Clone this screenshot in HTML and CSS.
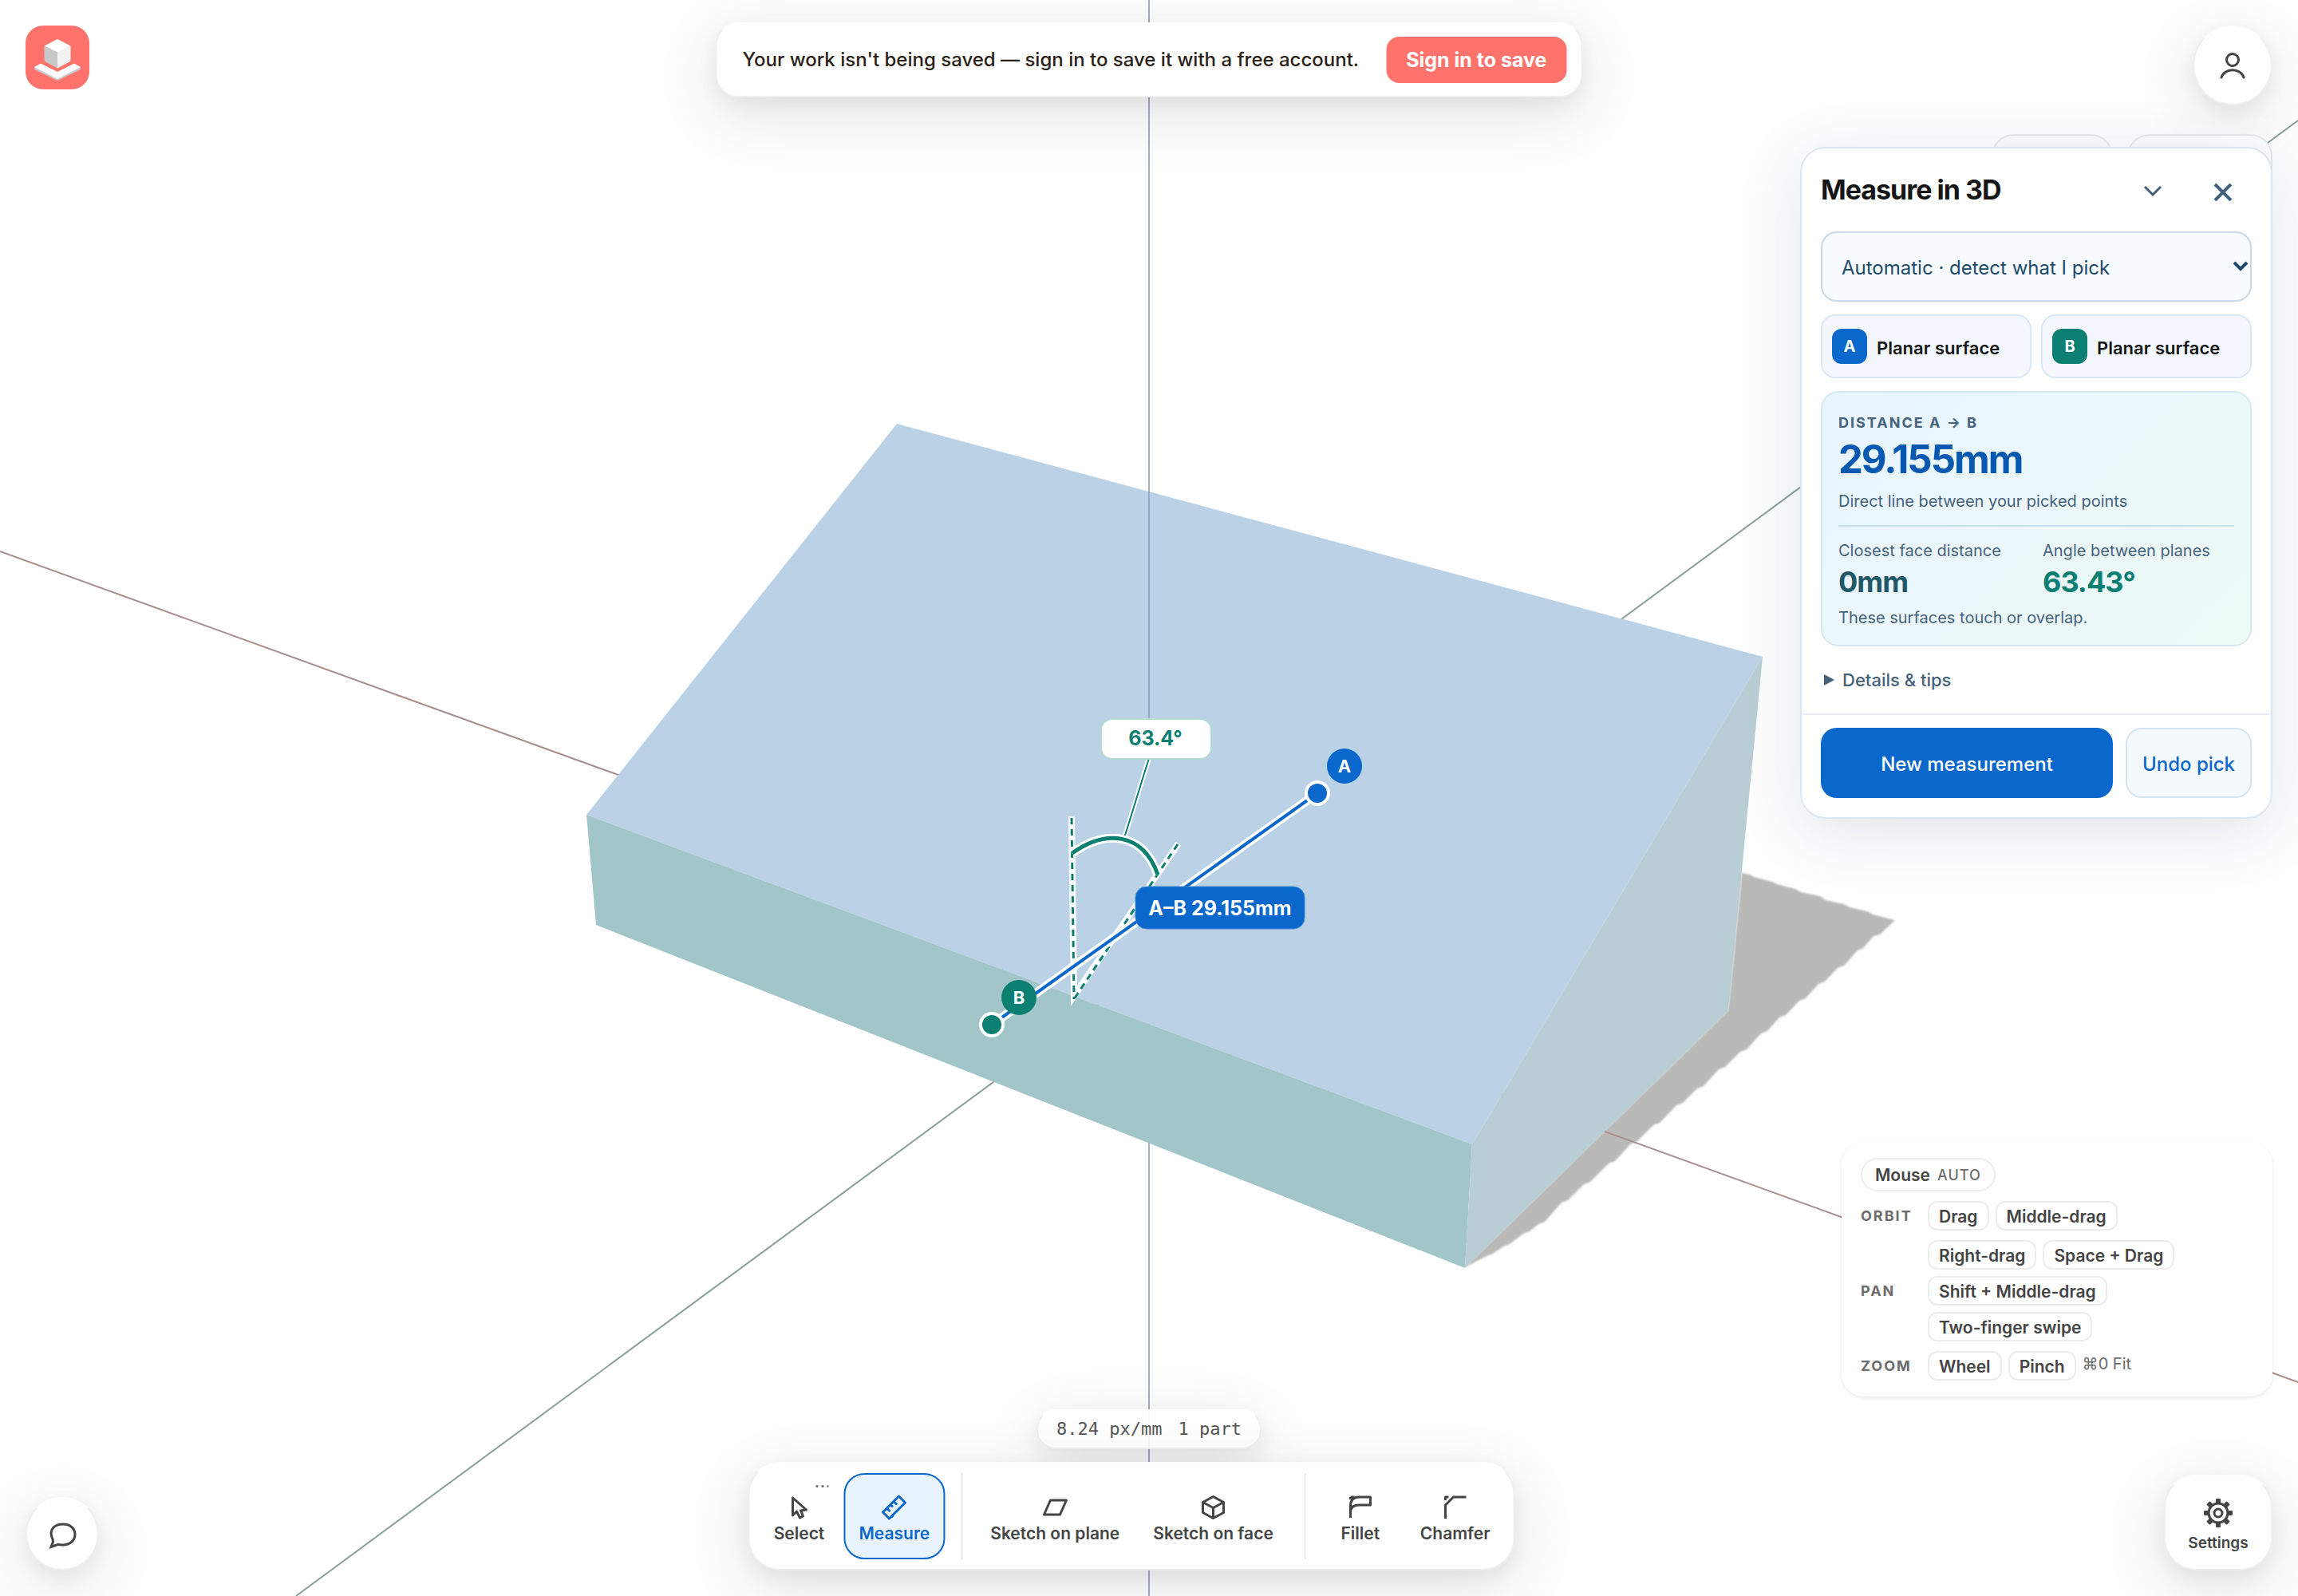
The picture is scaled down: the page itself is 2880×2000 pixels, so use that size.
FILE: index.html
```html
<!DOCTYPE html>
<html lang="en">
<head>
<meta charset="utf-8">
<meta name="viewport" content="width=device-width, initial-scale=1">
<title>Measure in 3D</title>
<link rel="stylesheet" href="styles.css">
</head>
<body>
<main class="workspace">
  <svg class="scene" viewBox="0 0 2880 2000" preserveAspectRatio="xMidYMid slice" role="img" aria-label="Wedge model with a measurement between two faces">
    <polygon class="cast-shadow" points="1836,1588 2166,1266 2183,1094 2193,1096 2198,1099 2221,1105 2227,1108 2250,1114 2257,1118 2281,1123 2288,1128 2311,1133 2318,1137 2340,1142 2347,1146 2375,1153 2356,1171 2348,1173 2335,1188 2328,1191 2311,1210 2303,1213 2287,1230 2279,1233 2263,1251 2255,1254 2238,1272 2230,1275 2215,1292 2207,1295 2189,1315 2181,1318 2162,1337 2154,1340 2135,1361 2127,1364 2109,1382 2101,1385 2080,1407 2072,1410 2051,1431 2043,1434 2024,1455 2016,1458 1993,1481 1985,1484 1965,1504 1957,1507 1936,1531 1928,1534 1917,1543 1909,1546 1892,1559 1884,1562 1871,1571 1863,1574 1842,1585"/>
    <line class="axis axis-x" x1="0" y1="691" x2="2880" y2="1732"/>
    <line class="axis axis-y" x1="371" y1="2000" x2="2880" y2="151"/>
    <line class="axis axis-z" x1="1440" y1="0" x2="1440" y2="2000"/>
    <polygon class="face-top" points="1124,531 2209,823 1845,1434 735,1021"/>
    <polygon class="face-front" points="735,1021 1845,1434 1836,1589 747,1159"/>
    <polygon class="face-side" points="2209,823 2166,1266 1836,1589 1845,1434"/>
    <line class="axis axis-z-over" x1="1440" y1="616" x2="1440" y2="900"/>

    <path class="halo" d="M1343 1023 L1346 1248 L1477 1057"/>
    <path class="ray" d="M1343 1025 L1346 1252"/>
    <path class="ray" d="M1476 1058 L1346 1252"/>
    <path class="halo halo-thin" d="M1440 950 L1409 1050"/>
    <path class="leader" d="M1440 950 L1409 1050"/>
    <path class="halo halo-arc" d="M1344 1069 C1385 1040 1432 1042 1451 1096"/>
    <path class="arc" d="M1344 1069 C1385 1040 1432 1042 1451 1096"/>
    <path class="halo halo-span" d="M1243 1284 L1651 994"/>
    <path class="span" d="M1243 1284 L1651 994"/>
    <circle class="point point-a" cx="1651" cy="994" r="14"/>
    <circle class="point point-b" cx="1243" cy="1284" r="14"/>
    <circle class="tag-a" cx="1685" cy="960" r="22"/>
    <text class="tag-text" x="1685" y="968">A</text>
    <circle class="tag-b" cx="1277" cy="1250" r="22"/>
    <text class="tag-text" x="1277" y="1258">B</text>
    <rect class="angle-box" x="1380" y="901" width="138" height="50" rx="14"/>
    <text class="angle-text" x="1448" y="934">63.4°</text>
    <rect class="span-box" x="1423" y="1111" width="212" height="53" rx="14"/>
    <text class="span-text" x="1529" y="1147">A–B 29.155mm</text>
  </svg>

  <a class="logo" href="#" aria-label="Home">
    <svg viewBox="0 0 80 80" aria-hidden="true">
      <path fill="#c9c9c8" d="M11 52v3l29 14 29-14v-3L40 60z"/>
      <path fill="#fff" d="M11 52l8-4.500 21 10.500 21-10.500 8 4.500-29 15z"/>
      <path fill="#fff" d="M40 17l16.500 8.500L40 34l-16.500-8.500z"/>
      <path fill="#c8c8c8" d="M23.500 25.500L40 33.500v20l-15-8q-1.500-1-1.500-3z"/>
      <path fill="#f2f2f1" d="M56.500 25.500L40 33.500v20l15-8q1.500-1 1.500-3z"/>
    </svg>
  </a>

  <aside class="toast raised" role="status">
    <span>Your work isn't being saved — sign in to save it with a free account.</span>
    <button class="toast-action" type="button">Sign in to save</button>
  </aside>

  <button class="account raised" type="button" aria-label="Account">
    <svg viewBox="0 0 36 36" aria-hidden="true"><circle cx="18" cy="11" r="7.500"/><path d="M4 33a14.500 12.500 0 0 1 28 0"/></svg>
  </button>

  <div class="view-chips" aria-hidden="true"><span class="view-chip"></span><span class="view-chip view-chip-wide"></span></div>

  <section class="panel" aria-labelledby="panel-title">
    <div class="panel-body">
      <header class="panel-head">
        <h1 id="panel-title">Measure in 3D</h1>
        <button class="icon-button" type="button" aria-label="Collapse"><svg viewBox="0 0 24 24" aria-hidden="true"><path stroke-width="3" d="M2 6l10 10L22 6"/></svg></button>
        <button class="icon-button" type="button" aria-label="Close"><svg viewBox="0 0 24 24" aria-hidden="true"><path stroke-width="4" d="M2 3l20 20M22 3L2 23"/></svg></button>
      </header>
      <div class="mode">
        <select aria-label="Measurement mode"><option>Automatic · detect what I pick</option></select>
        <svg class="mode-arrow" viewBox="0 0 20 14" aria-hidden="true"><path d="M2 2l8 8 8-8"/></svg>
      </div>
      <div class="picks">
        <div class="pick"><b class="pick-badge">A</b><span>Planar surface</span></div>
        <div class="pick"><b class="pick-badge pick-badge-b">B</b><span>Planar surface</span></div>
      </div>
      <div class="result">
        <h2>DISTANCE A → B</h2>
        <output class="distance">29.155mm</output>
        <p class="note">Direct line between your picked points</p>
        <dl class="metrics">
          <div><dt>Closest face distance</dt><dd>0mm</dd></div>
          <div><dt>Angle between planes</dt><dd class="angle">63.43°</dd></div>
        </dl>
        <p class="note">These surfaces touch or overlap.</p>
      </div>
      <details class="tips"><summary><svg viewBox="0 0 14 14" aria-hidden="true"><path d="M0 0l13 7-13 7z"/></svg>Details &amp; tips</summary></details>
    </div>
    <footer class="panel-foot">
      <button class="primary" type="button">New measurement</button>
      <button class="secondary" type="button">Undo pick</button>
    </footer>
  </section>

  <aside class="help" aria-label="Navigation controls">
    <button class="device" type="button">Mouse <span>AUTO</span></button>
    <dl class="help-rows">
      <dt>ORBIT</dt>
      <dd><kbd>Drag</kbd><kbd>Middle-drag</kbd></dd>
      <dt>PAN</dt>
      <dd><kbd>Right-drag</kbd><kbd>Space + Drag</kbd><kbd>Shift + Middle-drag</kbd><kbd>Two-finger swipe</kbd></dd>
      <dt>ZOOM</dt>
      <dd><kbd>Wheel</kbd><kbd>Pinch</kbd><span class="fit">⌘0 Fit</span></dd>
    </dl>
  </aside>

  <div class="status raised"><span>8.24 px/mm</span><span>1 part</span></div>

  <nav class="toolbar raised" aria-label="Tools">
    <button class="tool" type="button">
      <svg viewBox="0 0 32 32" aria-hidden="true"><path d="M8 4v22l5-5 4 8 4-2-3-7 7-1z"/></svg>Select
      <i class="more" aria-hidden="true"></i>
    </button>
    <button class="tool tool-active" type="button" aria-pressed="true">
      <svg viewBox="0 0 32 32" aria-hidden="true"><path d="M2 22L22 2l8 8-20 20zM7 17l4 4M11.500 12.500l3 3M15.500 8.500l4 4M13 26l2 2"/></svg>Measure
    </button>
    <span class="divider"></span>
    <button class="tool" type="button">
      <svg viewBox="0 0 32 32" aria-hidden="true"><path d="M10 7h20l-8 18H2z"/></svg>Sketch on plane
    </button>
    <button class="tool" type="button">
      <svg viewBox="0 0 32 32" aria-hidden="true"><path d="M16 2.500l13 7v13l-13 7-13-7v-13zM3 9.500l13 7 13-7M16 16.500v13"/></svg>Sketch on face
    </button>
    <span class="divider"></span>
    <button class="tool" type="button">
      <svg viewBox="0 0 32 32" aria-hidden="true"><path d="M4 29V14q0-11 11-11h14v10H15Q4 13 4 22M4 3h5M4 3v3"/></svg>Fillet
    </button>
    <button class="tool" type="button">
      <svg viewBox="0 0 32 32" aria-hidden="true"><path d="M4 30V13L14 3h16M4 7V3h4"/></svg>Chamfer
    </button>
  </nav>

  <button class="chat raised" type="button" aria-label="Chat">
    <svg viewBox="0 0 36 36" aria-hidden="true"><path d="M5 23C-1 10 8 4 18 4s15 6 15 13-6 13-15 13c-4 0-6-1-8 0l-7 2.500 2.500-6.500z"/></svg>
  </button>

  <button class="settings raised" type="button">
    <svg viewBox="0 0 36 36" aria-hidden="true"><g fill="currentColor" stroke="none"><rect id="tooth" x="15" y="0" width="6" height="36" rx="1"/><use href="#tooth" transform="rotate(45 18 18)"/><use href="#tooth" transform="rotate(90 18 18)"/><use href="#tooth" transform="rotate(135 18 18)"/></g><circle cx="18" cy="18" r="12" fill="#fefefe"/><circle cx="18" cy="18" r="5"/></svg>
    Settings
  </button>
</main>
</body>
</html>
```
FILE: styles.css
```css
* { box-sizing: border-box; }

body {
  margin: 0;
  font-family: Inter, "Liberation Sans", sans-serif;
  color: #2a2118;
  background: #fefefe;
}

button, select { font: inherit; color: inherit; margin: 0; }
button { cursor: pointer; padding: 0; border: 0; background: none; }
h1, h2, p, dl, dd { margin: 0; }

.workspace {
  position: relative;
  min-height: 100vh;
  overflow: hidden;
}

/* 3D viewport */
.scene { position: absolute; inset: 0; width: 100%; height: 100%; }
.cast-shadow { fill: #b9b9b7; filter: blur(1px); }
.axis { stroke-width: 2; }
.axis-x { stroke: #a98d8c; }
.axis-y { stroke: #8a9f97; }
.axis-z { stroke: #a0aecb; }
.axis-z-over { stroke: #8faace; }
.face-top { fill: #bbd2e6; }
.face-front { fill: #a2c5c9; }
.face-side { fill: #b9ced4; }
.halo { fill: none; stroke: #fff; stroke-width: 8; }
.halo-thin { stroke-width: 6; }
.halo-arc { stroke-width: 11; }
.halo-span { stroke-width: 11; }
.ray { fill: none; stroke: #0a7f72; stroke-width: 3; stroke-dasharray: 8 6; }
.leader { fill: none; stroke: #0a7f72; stroke-width: 2; }
.arc { fill: none; stroke: #0a7f72; stroke-width: 5; }
.span { stroke: #0a67cb; stroke-width: 4; }
.point { stroke: #fff; stroke-width: 4; }
.point-a, .tag-a { fill: #0a67cb; }
.point-b, .tag-b { fill: #0a7f72; }
.tag-text, .angle-text, .span-text { font-size: 25px; font-weight: 700; text-anchor: middle; fill: #fff; }
.tag-text { font-size: 22px; }
.angle-box { fill: #fff; stroke: #b5dcd2; stroke-width: 2; }
.angle-text { fill: #0a7f72; }
.span-box { fill: #0a67cb; stroke: #3f87d5; stroke-width: 1; }

.raised {
  background: #fefefe;
  border: 2px solid #efefef;
  border-top-color: #fff;
  box-shadow: 0 8px 24px rgba(0, 0, 0, .06), 0 20px 80px rgba(0, 0, 0, .11);
}

.logo {
  position: absolute;
  left: 32px;
  top: 32px;
  width: 80px;
  height: 80px;
  border-radius: 22px;
  background: #ff736c;
}
.logo svg { display: block; }

.toast {
  position: absolute;
  top: 28px;
  left: 50%;
  transform: translateX(-50%);
  display: flex;
  align-items: center;
  gap: 34px;
  padding: 16px 18px 16px 32px;
  border-radius: 28px;
  font-size: 24px;
  line-height: 32px;
  font-weight: 500;
  white-space: nowrap;
}
.toast-action {
  padding: 13px 25px;
  border-radius: 16px;
  color: #fff;
  background: #ff736c;
  font-size: 25px;
  font-weight: 700;
}

.account, .chat {
  position: absolute;
  display: grid;
  place-items: center;
  border-radius: 50%;
  color: #444;
}
.account { top: 32px; right: 32px; width: 100px; height: 100px; }
.chat { left: 32px; bottom: 32px; width: 92px; height: 92px; padding: 4px 0 0 2px; }
.account svg, .chat svg, .settings svg { width: 36px; height: 36px; fill: none; stroke: currentColor; stroke-width: 3; stroke-linecap: round; }

.view-chips {
  position: absolute;
  top: 168px;
  right: 32px;
  display: flex;
  gap: 18px;
}
.view-chip { width: 152px; height: 60px; border: 2px solid #e9e9e9; border-radius: 28px; background: #fcfcfc; }
.view-chip-wide { width: 182px; height: 72px; }

/* Measurement panel */
.panel {
  position: absolute;
  top: 184px;
  right: 32px;
  width: 592px;
  border: 2px solid #dae7f1;
  border-radius: 32px;
  background: #fefefe;
  box-shadow: 0 16px 80px rgba(20, 60, 100, .13);
}
.panel-body { display: grid; gap: 16px; padding: 20px 24px 16px; }
.panel-head { display: grid; grid-template-columns: 1fr 88px 88px; align-items: center; height: 68px; margin-right: -8px; }
.panel-head h1 { padding-bottom: 4px; color: #151515; font-size: 34px; line-height: 44px; font-weight: 700; letter-spacing: -1px; }
.icon-button { display: grid; place-items: center; height: 68px; color: #42607c; }
.icon-button svg { width: 24px; height: 24px; fill: none; stroke: currentColor; }

.mode { position: relative; }
.mode select {
  display: block;
  width: 100%;
  height: 88px;
  padding: 2px 24px 0;
  appearance: none;
  border: 2px solid #c7d9e7;
  border-radius: 20px;
  background: #f7faff;
  color: #204a68;
  font-size: 24px;
}
.mode-arrow { position: absolute; right: 4px; top: 37px; width: 20px; height: 14px; fill: none; stroke: #204a68; stroke-width: 4; pointer-events: none; }

.picks { display: grid; grid-template-columns: 1fr 1fr; gap: 12px; }
.pick {
  display: flex;
  align-items: center;
  gap: 12px;
  height: 80px;
  padding: 0 12px;
  border: 2px solid #dbe8f4;
  border-radius: 18px;
  background: #f4f8fe;
  color: #151515;
  font-size: 22px;
  font-weight: 600;
}
.pick span { padding-top: 3px; }
.pick-badge { display: grid; place-items: center; width: 44px; height: 44px; border-radius: 12px; background: #0a67cb; color: #fff; font-size: 20px; font-weight: 700; }
.pick-badge-b { background: #0a7f72; }

.result {
  padding: 24px 20px 20px;
  border: 2px solid #d7e8ef;
  border-radius: 22px;
  background: linear-gradient(135deg, #e8f4ff, #edfaf5);
  color: #46627b;
}
.result h2 { font-size: 18px; line-height: 28px; font-weight: 700; letter-spacing: 2px; }
.distance { display: block; color: #0758b0; font-size: 49px; line-height: 64px; font-weight: 700; letter-spacing: -2px; }
.note, .metrics dt { font-size: 20px; line-height: 28px; }
.note { padding-top: 6px; }
.metrics { display: grid; grid-template-columns: 1fr 1fr; gap: 16px; margin-top: 16px; padding-top: 16px; border-top: 2px solid #cbdfe9; }
.metrics dd { color: #205868; font-size: 36px; line-height: 50px; font-weight: 700; letter-spacing: -1px; }
.metrics .angle { color: #0a7f72; }

.tips summary { display: flex; align-items: center; gap: 9px; height: 52px; padding-left: 4px; color: #46627b; font-size: 22px; font-weight: 500; list-style: none; cursor: pointer; }
.tips svg { width: 14px; height: 14px; fill: currentColor; }

.panel-foot { display: grid; grid-template-columns: 1fr 158px; gap: 16px; padding: 16px 24px 24px; border-top: 2px solid #e7eef3; }
.panel-foot button { height: 88px; padding-top: 2px; border-radius: 20px; font-size: 24px; font-weight: 500; }
.primary { background: #0a67cb; color: #fff; }
.panel-foot .secondary { border: 2px solid #d5e4ee; background: #f4f9fe; color: #0a67cb; }

/* Navigation help */
.help {
  position: absolute;
  right: 32px;
  bottom: 250px;
  width: 540px;
  padding: 20px 24px;
  border-radius: 28px;
  background: #fefefe;
  box-shadow: 0 2px 4px rgba(0, 0, 0, .08);
  color: #444;
  font-size: 21px;
}
.device { display: flex; align-items: center; gap: 9px; height: 42px; margin-bottom: 12px; padding: 0 16px; border: 2px solid #ececec; border-radius: 21px; font-weight: 600; }
.device span { color: #6c6c6c; font-size: 18px; font-weight: 500; letter-spacing: 1px; }
.help-rows { display: grid; grid-template-columns: 72px 320px; column-gap: 12px; row-gap: 12px; align-items: center; }
.help-rows dt { color: #6c6c6c; font-size: 18px; font-weight: 700; letter-spacing: 2px; }
.help-rows dd { display: flex; flex-wrap: wrap; gap: 8px; }
kbd { height: 37px; padding: 0 12px; border: 2px solid #ececec; border-radius: 12px; font: 600 21px/35px Inter, sans-serif; }
.fit { color: #6c6c6c; font-size: 20px; line-height: 32px; }

/* Bottom bar */
.status {
  position: absolute;
  left: 50%;
  bottom: 184px;
  transform: translateX(-50%);
  display: flex;
  gap: 20px;
  padding: 0 23px;
  border-radius: 24px;
  background: rgba(254, 254, 254, .92);
  color: #555;
  font: 22px/46px "DejaVu Sans Mono", monospace;
  white-space: nowrap;
}
.toolbar {
  position: absolute;
  left: calc(50% - 22px);
  bottom: 32px;
  transform: translateX(-50%);
  display: flex;
  gap: 4px;
  padding: 12px 10px;
  border-radius: 40px;
}
.tool {
  position: relative;
  display: flex;
  flex-direction: column;
  align-items: center;
  gap: 5px;
  min-width: 104px;
  height: 108px;
  padding: 25px 17px 0;
  border: 2px solid transparent;
  border-radius: 26px;
  color: #444;
  font-size: 21px;
  line-height: 24px;
  font-weight: 600;
  white-space: nowrap;
}
.tool svg { width: 32px; height: 32px; fill: none; stroke: currentColor; stroke-width: 3; stroke-linejoin: round; }
.tool-active { border-color: #0a67cb; background: #e8f3fe; color: #0a67cb; }
.more { position: absolute; top: 13px; right: 13px; width: 18px; height: 3px; background: radial-gradient(circle, #666 1px, transparent 2px) 0 0 / 7px 3px; }
.divider { width: 2px; margin: 0 12px 0 16px; background: #ebebeb; }

.settings {
  position: absolute;
  right: 32px;
  bottom: 32px;
  display: flex;
  flex-direction: column;
  align-items: center;
  gap: 9px;
  width: 136px;
  height: 120px;
  padding-top: 28px;
  border-radius: 40px;
  color: #444;
  font-size: 19px;
  line-height: 22px;
  font-weight: 600;
}
```
